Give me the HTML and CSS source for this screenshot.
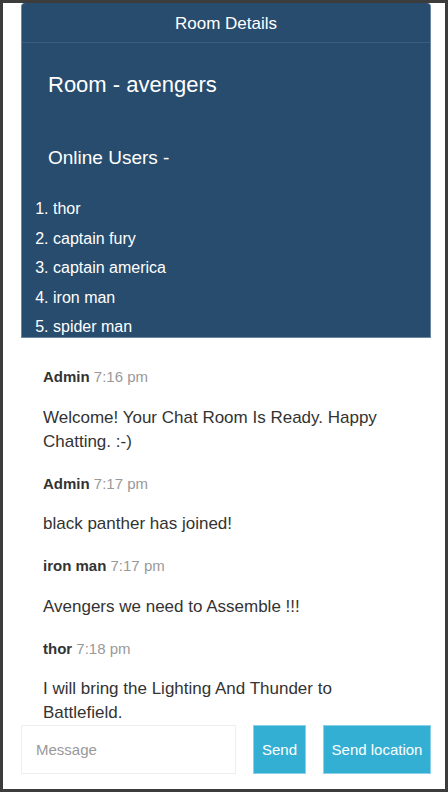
FILE: index.html
```html
<!DOCTYPE html>
<html>
<head>
<meta charset="utf-8">
<link rel="stylesheet" href="styles.css">
</head>
<body>
<div class="frame">
  <div class="page">
    <aside class="sidebar">
      <div class="sidebar-head">Room Details</div>
      <h2 class="room-title">Room - avengers</h2>
      <h3 class="users-title">Online Users -</h3>
      <ol class="users">
        <li>thor</li>
        <li>captain fury</li>
        <li>captain america</li>
        <li>iron man</li>
        <li>spider man</li>
      </ol>
    </aside>
    <ul class="messages">
      <li class="message">
        <p class="meta"><span class="name">Admin</span> <span class="time">7:16 pm</span></p>
        <p class="body">Welcome! Your Chat Room Is Ready. Happy Chatting. :-)</p>
      </li>
      <li class="message">
        <p class="meta"><span class="name">Admin</span> <span class="time">7:17 pm</span></p>
        <p class="body">black panther has joined!</p>
      </li>
      <li class="message">
        <p class="meta"><span class="name">iron man</span> <span class="time">7:17 pm</span></p>
        <p class="body">Avengers we need to Assemble !!!</p>
      </li>
      <li class="message">
        <p class="meta"><span class="name">thor</span> <span class="time">7:18 pm</span></p>
        <p class="body">I will bring the Lighting And Thunder to Battlefield.</p>
      </li>
      <li class="message">
        <p class="meta"><span class="name">captain america</span> <span class="time">7:18 pm</span></p>
        <p class="body">We need to fight Thanos together.</p>
      </li>
    </ul>
  </div>
  <form class="composer">
    <input class="msg-input" type="text" placeholder="Message">
    <button class="btn btn-send" type="button">Send</button>
    <button class="btn btn-loc" type="button">Send location</button>
  </form>
</div>
</body>
</html>
```

FILE: styles.css
```css
* { box-sizing: border-box; }
html, body {
  margin: 0;
  padding: 0;
  background: #3c3c3c;
}
body {
  font-family: "Liberation Sans", Arial, sans-serif;
}
.frame {
  position: relative;
  width: 448px;
  height: 792px;
  border: 3px solid #3c3c3c;
  background: #fff;
  overflow: hidden;
}
.page {
  padding: 0 14px 0 18px;
}
.sidebar {
  height: 335px;
  overflow: hidden;
  background: #284c6d;
  color: #fff;
  border-left: 1px solid #6d86a0;
  border-right: 1px solid #6d86a0;
  border-bottom: 1px solid #6d86a0;
  border-radius: 4px 4px 0 0;
}
.sidebar-head {
  height: 40px;
  padding-top: 2px;
  line-height: 38px;
  text-align: center;
  font-size: 17px;
  border-bottom: 1px solid #3a5d7e;
}
.room-title {
  margin: 0;
  padding: 30px 26px 25px;
  font-size: 22px;
  line-height: 24px;
  font-weight: normal;
}
.users-title {
  margin: 0;
  padding: 25px 26px 0;
  font-size: 19px;
  line-height: 22px;
  font-weight: normal;
}
.users {
  margin: 25px 0 0;
  padding-left: 31px;
  font-size: 16px;
  line-height: 29.5px;
}
.messages {
  list-style: none;
  margin: 0;
  padding: 29px 20px 0 22px;
}
.message {
  margin-bottom: 20px;
}
.meta {
  margin: 0;
  font-size: 15px;
  line-height: 20px;
}
.name {
  font-weight: bold;
  color: #333;
}
.time {
  color: #999;
}
.body {
  margin: 18.5px 0 0;
  font-size: 17px;
  line-height: 24px;
  color: #333;
}
.composer {
  position: absolute;
  left: 18px;
  right: 14px;
  bottom: 11px;
  display: flex;
  gap: 17px;
  padding: 3px 0 4px;
  margin: 0;
  background: #fff;
}
.msg-input {
  width: 215px;
  height: 49px;
  border: 1px solid #eee;
  padding: 0 14px;
  font-family: "Liberation Sans", Arial, sans-serif;
  font-size: 15px;
  color: #333;
  outline: none;
}
.msg-input::placeholder {
  color: #999;
}
.btn {
  height: 49px;
  border: 1px solid #8ad0e6;
  background: #33afd3;
  color: #fff;
  font-family: "Liberation Sans", Arial, sans-serif;
  font-size: 15px;
  padding: 0;
  cursor: pointer;
}
.btn-send {
  width: 53px;
}
.btn-loc {
  flex: 1;
}
```
